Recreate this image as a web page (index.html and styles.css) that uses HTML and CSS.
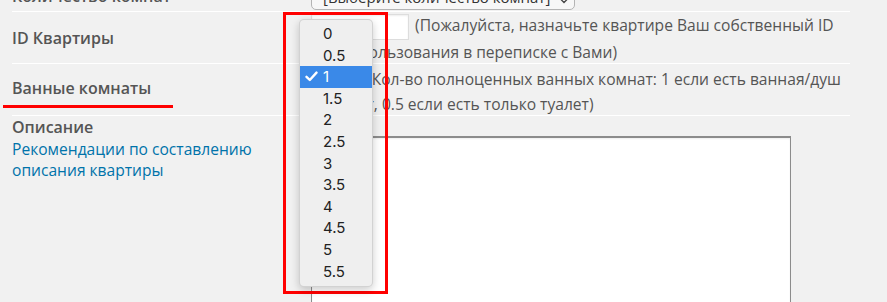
FILE: index.html
```html
<!DOCTYPE html>
<html lang="ru">
<head>
  <meta charset="UTF-8">
  <meta name="viewport" content="width=device-width, initial-scale=1.0">
  <title>Квартира</title>
  <link rel="stylesheet" href="styles.css">
</head>
<body>
  <div class="page">
    <div class="form-table">
      <div class="row row-rooms">
        <div class="label">Количество комнат</div>
        <div class="field">
          <span class="select select-wide">[Выберите количество комнат]
            <svg class="arrows" width="8" height="12" viewBox="0 0 8 12"><path d="M1 4.5 L4 1.5 L7 4.5 M1 7.5 L4 10.5 L7 7.5" fill="none" stroke="#444" stroke-width="1.3"/></svg>
          </span>
        </div>
      </div>
      <div class="row row-id">
        <div class="label">ID Квартиры</div>
        <div class="field">
          <input class="text-input" type="text">
          <span class="desc">(Пожалуйста, назначьте квартире Ваш собственный ID для использования в переписке с Вами)</span>
        </div>
      </div>
      <div class="row row-baths">
        <div class="label">Ванные комнаты</div>
        <div class="field">
          <span class="select select-small">1</span>
          <span class="desc">(Кол-во полноценных ванных комнат: 1 если есть ванная/душ и туалет, 0.5 если есть только туалет)</span>
        </div>
      </div>
      <div class="row row-desc">
        <div class="label-block">
          <div class="label">Описание</div>
          <a class="help-link" href="#">Рекомендации по составлению описания квартиры</a>
        </div>
        <div class="field">
          <textarea class="text-area"></textarea>
        </div>
      </div>
    </div>

    <div class="mark-underline"></div>
    <div class="mark-box"></div>

    <ul class="popup">
      <li>0</li>
      <li>0.5</li>
      <li class="selected">
        <svg class="check" width="13" height="11" viewBox="0 0 13 11"><path d="M1.5 5.8 L4.8 9 L11.5 1.6" fill="none" stroke="#fff" stroke-width="2.4" stroke-linecap="round" stroke-linejoin="round"/></svg>1
      </li>
      <li>1.5</li>
      <li>2</li>
      <li>2.5</li>
      <li>3</li>
      <li>3.5</li>
      <li>4</li>
      <li>4.5</li>
      <li>5</li>
      <li>5.5</li>
    </ul>
  </div>
</body>
</html>
```

FILE: styles.css
```css
body {
  margin: 0;
  background: #f1f1f1;
  font-family: "Open Sans", "Liberation Sans", sans-serif;
  color: #555;
}
.page {
  position: relative;
  height: 302px;
  overflow: hidden;
}
.form-table {
  margin: -20px 0 0 12px;
  width: 838px;
}
.row {
  display: grid;
  grid-template-columns: 299px 532px;
  border-bottom: 1px solid #fff;
}
.row-rooms { height: 31px; align-items: center; }
.row-id { height: 51px; }
.row-baths { height: 51px; }

.label {
  font-size: 16px;
  font-weight: 600;
  color: #555;
}
.row-id .label,
.row-rooms .label {
  align-self: center;
}
.row-baths .label {
  align-self: center;
  margin-top: -3px;
}

.field {
  font-size: 15.6px;
  line-height: 24px;
}
.row-id .field { padding-top: 1px; }
.row-baths .field { padding-top: 3px; }

.select {
  display: inline-block;
  box-sizing: border-box;
  background: #f7f7f7;
  border: 1px solid #b4b4b4;
  border-radius: 5px;
  color: #333;
  font-size: 15px;
  line-height: 24px;
  vertical-align: middle;
}
.select-wide {
  width: 264px;
  height: 26px;
  padding: 0 10px 0 11px;
  margin-top: 2px;
  position: relative;
}
.select-wide .arrows {
  position: absolute;
  right: 6px;
  top: 7px;
}
.select-small {
  width: 52px;
  height: 22px;
  line-height: 20px;
  padding-left: 8px;
}

.text-input {
  box-sizing: border-box;
  width: 98px;
  height: 26px;
  margin: 0 2px 0 0;
  border: 1px solid #ddd;
  background: #fff;
  box-shadow: inset 0 1px 2px rgba(0,0,0,.07);
  vertical-align: middle;
}

.label-block {
  padding-top: 1px;
  line-height: 21.5px;
}
.help-link {
  color: #0073aa;
  font-size: 15.6px;
  text-decoration: none;
}
.text-area {
  display: block;
  box-sizing: border-box;
  width: 480px;
  height: 190px;
  margin-top: 20px;
  border: 1px solid #8c8c8c;
  border-top-width: 2px;
  background: #fff;
  box-shadow: inset 0 1px 2px rgba(0,0,0,.07);
  resize: none;
}

/* annotations on top of the screenshot */
.mark-underline {
  position: absolute;
  left: 3px;
  top: 105px;
  width: 170px;
  height: 3px;
  background: #ff0000;
}
.mark-box {
  position: absolute;
  left: 283px;
  top: 12px;
  width: 105px;
  height: 282px;
  box-sizing: border-box;
  border: 3px solid #ff0000;
}

/* native-looking popup menu */
.popup {
  position: absolute;
  left: 299px;
  top: 19px;
  width: 74px;
  height: 268px;
  box-sizing: border-box;
  margin: 0;
  padding: 3px 0 5px;
  list-style: none;
  background: #efefef;
  border: 1px solid rgba(0,0,0,.12);
  border-radius: 5px;
  box-shadow: 0 3px 9px rgba(0,0,0,.2);
  font-family: Inter, "Liberation Sans", sans-serif;
  font-size: 15px;
  color: #222;
}
.popup li {
  position: relative;
  height: 21.6px;
  line-height: 21.6px;
  padding-left: 23px;
}
.popup li.selected {
  background: #3a89e8;
  color: #fff;
}
.popup .check {
  position: absolute;
  left: 5px;
  top: 5px;
}
```
